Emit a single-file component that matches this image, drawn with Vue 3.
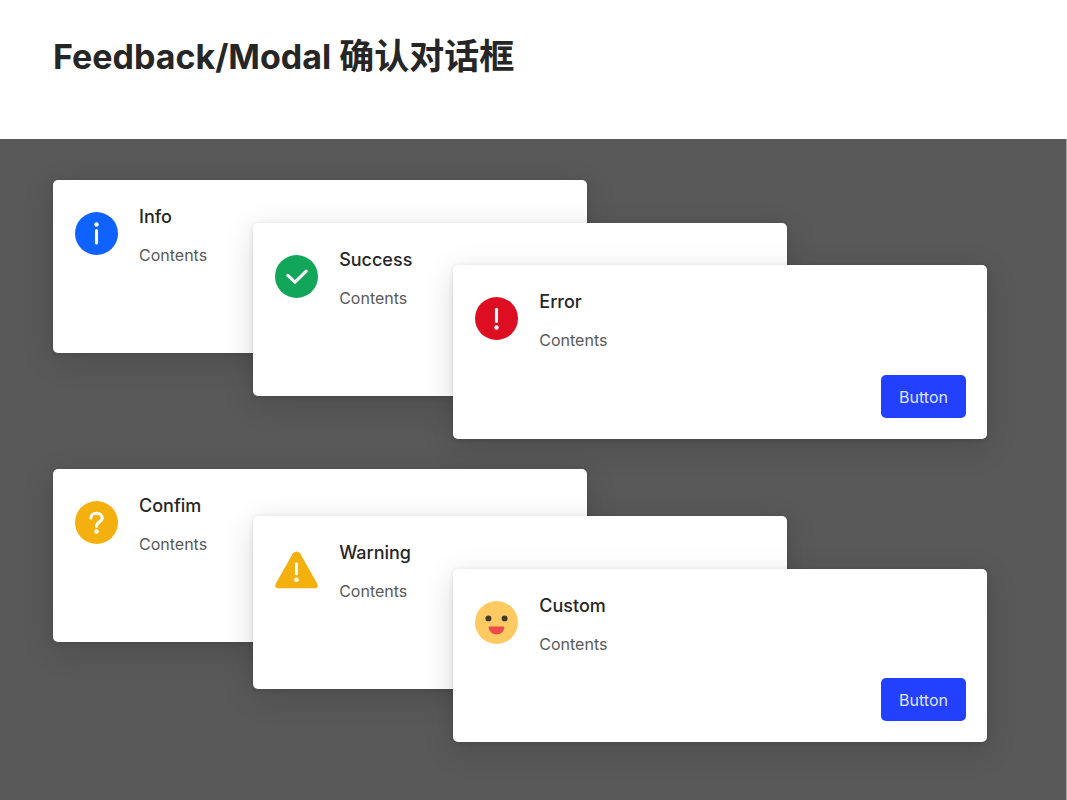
<script setup>
const groups = [
  {
    name: 'status',
    modals: [
      { title: 'Info', icon: 'info' },
      { title: 'Success', icon: 'success' },
      { title: 'Error', icon: 'error', action: 'Button' }
    ]
  },
  {
    name: 'prompt',
    modals: [
      { title: 'Confim', icon: 'confirm' },
      { title: 'Warning', icon: 'warning' },
      { title: 'Custom', icon: 'custom', action: 'Button' }
    ]
  }
]
</script>

<template>
  <div class="page">
    <header class="page-header">
      <h1>Feedback/Modal <span class="cjk">确认对话框</span></h1>
    </header>
    <main class="backdrop">
      <section v-for="group in groups" :key="group.name" class="stack" :class="group.name">
        <article v-for="modal in group.modals" :key="modal.title" class="modal">
          <svg class="icon" viewBox="0 0 42 42" aria-hidden="true">
            <g v-if="modal.icon === 'info'">
              <circle cx="21" cy="21" r="21" fill="#0f62fe" />
              <circle cx="21" cy="12.2" r="2.2" fill="#fff" />
              <path d="M21 18.2V30.2" class="stroke" />
            </g>
            <g v-else-if="modal.icon === 'success'">
              <circle cx="21" cy="21" r="21" fill="#12a65a" />
              <path d="M12.5 19.8L19.5 26.5L30.5 15.8" class="stroke" />
            </g>
            <g v-else-if="modal.icon === 'error'">
              <circle cx="21" cy="21" r="21" fill="#dd0d22" />
              <path d="M21 12V24" class="stroke" />
              <circle cx="21" cy="29.8" r="2.2" fill="#fff" />
            </g>
            <g v-else-if="modal.icon === 'confirm'">
              <circle cx="21" cy="21" r="21" fill="#f4b00f" />
              <path d="M15.5 16.5C15.5 13.6 17.9 12 21 12C24.3 12 26.6 13.9 26.6 16.8C26.6 20.3 21 20.5 21 24.6" class="stroke" />
              <circle cx="21" cy="29.8" r="2.2" fill="#fff" />
            </g>
            <g v-else-if="modal.icon === 'warning'">
              <path d="M17.6 5.2Q21 1.6 24.4 5.2L41.2 34.6Q43 39.4 38.5 39.4H3.5Q-1 39.4 .8 34.6Z" fill="#f4b00f" />
              <path d="M21 15.3V25.2" class="stroke" />
              <circle cx="21" cy="30.9" r="2.2" fill="#fff" />
            </g>
            <g v-else>
              <circle cx="21" cy="21" r="21" fill="#ffca62" />
              <circle cx="13.1" cy="17" r="2.9" fill="#43382b" />
              <circle cx="28.9" cy="17" r="2.9" fill="#43382b" />
              <path d="M14 24.8H28Q28.9 24.8 28.7 26C28 30.2 25 32.8 21 32.8C17 32.8 14 30.2 13.3 26Q13.1 24.8 14 24.8Z" fill="#ef4b4a" />
            </g>
          </svg>
          <div class="copy">
            <h2>{{ modal.title }}</h2>
            <p>Contents</p>
          </div>
          <button v-if="modal.action" type="button">{{ modal.action }}</button>
        </article>
      </section>
    </main>
  </div>
</template>

<style>
body {
  margin: 0;
}
</style>

<style scoped>
.page {
  display: flex;
  flex-direction: column;
  min-height: 100vh;
  background: #fff;
  font-family: Inter, "Noto Sans CJK SC", sans-serif;
}
.page-header {
  box-sizing: border-box;
  min-height: 139px;
  padding: 30px 53px;
}
h1 {
  margin: 0;
  color: #262626;
  font-size: 34px;
  line-height: 48px;
  font-weight: 700;
}
.cjk {
  font-family: "Noto Sans CJK SC", sans-serif;
  font-size: 35px;
  font-weight: 700;
}
.backdrop {
  flex: 1;
  display: flex;
  flex-direction: column;
  gap: 30px;
  padding: 41px 79px 57px 53px;
  background: #595959;
  border-right: 1px solid #a6a6a6;
  box-sizing: border-box;
}
.stack {
  display: grid;
  grid-template-columns: 3fr 3fr 2fr 3fr 3fr;
}
.status {
  grid-template-rows: 43px 42px 88px 43px 43px;
}
.prompt {
  grid-template-rows: 47px 53px 73px 47px 53px;
}
.modal {
  box-sizing: border-box;
  display: grid;
  grid-template-columns: 43px 1fr auto;
  column-gap: 21px;
  align-items: start;
  padding: 21px 21px 21px 22px;
  background: #fff;
  border-radius: 5px;
  box-shadow: 0 8px 32px rgba(0, 0, 0, 0.14), 0 1px 5px rgba(0, 0, 0, 0.12);
}
.modal:nth-child(1) {
  grid-area: 1 / 1 / 4 / 4;
}
.modal:nth-child(2) {
  grid-area: 2 / 2 / 5 / 5;
}
.modal:nth-child(3) {
  grid-area: 3 / 3 / 6 / 6;
}
.icon {
  width: 43px;
  height: 43px;
  margin-top: 11px;
  overflow: visible;
}
.stroke {
  fill: none;
  stroke: #fff;
  stroke-width: 3;
  stroke-linecap: round;
  stroke-linejoin: round;
}
h2 {
  margin: 0;
  color: #262626;
  font-size: 18px;
  line-height: 32px;
  font-weight: 500;
}
p {
  margin: 10px 0 0;
  color: #595959;
  font-size: 16px;
  line-height: 24px;
}
button {
  align-self: end;
  height: 43px;
  padding: 0 18px;
  border: 0;
  border-radius: 5px;
  background: #2440ff;
  color: #dfe4ff;
  font: 400 16px/24px Inter, sans-serif;
}
</style>
